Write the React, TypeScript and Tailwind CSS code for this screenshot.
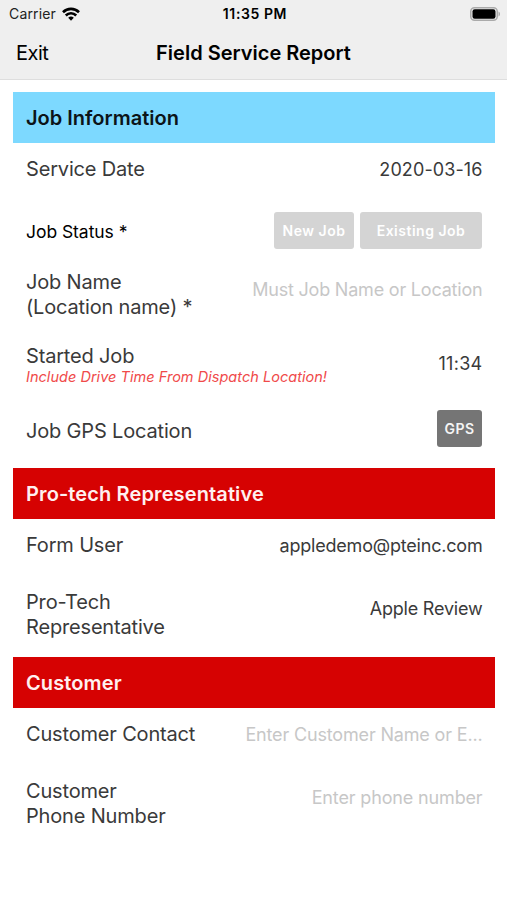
import type { ReactNode } from "react";

const SectionHeader = ({ title, className }: { title: string; className: string }) => (
  <div className={`flex h-[51px] items-center px-[13px] text-[20px] leading-6 font-semibold ${className}`}>
    <h2>{title}</h2>
  </div>
);

const Row = ({ label, className, children }: { label: ReactNode; className: string; children: ReactNode }) => (
  <div className={`flex items-center justify-between pr-[12.5px] pl-[13px] ${className}`}>
    <div className="text-[20px] leading-[25px] tracking-[-0.17px] whitespace-nowrap">{label}</div>
    {children}
  </div>
);

const App = () => {
  return (
    <div className="h-[900px] w-[507px] overflow-hidden bg-white font-['Inter',sans-serif] text-[#3a3a3a]">
      {/* Status bar and title */}
      <header className="h-20 border-b border-[#dedede] bg-[#efefef] text-black">
        <div className="grid h-[27px] grid-cols-3 items-center pr-[6px] pl-[9px] text-[14px]">
          <div className="flex items-center gap-1.5 tracking-[0.15px] text-[#222]">
            <span>Carrier</span>
            <svg width="18" height="14" viewBox="0 0 18 14" fill="none" stroke="#000" strokeWidth="2.6">
              <path d="M1 5.2a11.4 11.4 0 0 1 16 0M3.8 8.5a7.3 7.3 0 0 1 10.4 0" />
              <path d="M6.2 10.8a4 4 0 0 1 5.6 0L9 13.7z" fill="#000" stroke="none" />
            </svg>
          </div>
          <span className="text-center font-semibold tracking-[0.6px] whitespace-nowrap">11:35 PM</span>
          <svg className="justify-self-end" width="31" height="14" viewBox="0 0 31 14">
            <rect x=".75" y=".75" width="26.5" height="12.5" rx="3.8" fill="none" stroke="#aaa" strokeWidth="1.5" />
            <rect x="2.5" y="2.3" width="23" height="9.4" rx="2.2" />
            <path d="M28.5 4.5c2 .7 2 4.3 0 5z" fill="#aaa" />
          </svg>
        </div>
        <div className="grid h-[52px] grid-cols-[90px_1fr_90px] items-center px-4 text-[20px]">
          <span className="tracking-[-0.5px]">Exit</span>
          <h1 className="text-center font-semibold whitespace-nowrap">Field Service Report</h1>
        </div>
      </header>

      <main className="pt-3 pr-3 pl-[13px]">
        <SectionHeader title="Job Information" className="bg-[#7dd9ff] text-[#0c1418]" />
        <Row label="Service Date" className="h-[53px]">
          <span className="text-[18px] tracking-[0.1px]">2020-03-16</span>
        </Row>
        <Row
          label={<span className="text-[17.5px] tracking-[-0.05px] text-black">Job Status *</span>}
          className="h-[71px]"
        >
          <div className="mr-[0.5px] mb-[2px] flex gap-1.5 text-[14px] font-semibold tracking-[0.5px] text-white">
            <button className="h-[37px] w-[80px] rounded-[3px] bg-[#d4d4d4]">New Job</button>
            <button className="h-[37px] w-[122px] rounded-[3px] bg-[#d4d4d4]">Existing Job</button>
          </div>
        </Row>
        <Row label={<>Job Name<br />(Location name) *</>} className="h-[56px]">
          <span className="mb-3 text-[18px] tracking-[-0.2px] text-[#c7c7c7]">Must Job Name or Location</span>
        </Row>
        <Row
          label={
            <div className="pt-1">
              <div className="h-[23px]">Started Job</div>
              <div className="text-[14.5px] leading-[20px] tracking-[0.03px] text-[#f04a4a] italic">
                Include Drive Time From Dispatch Location!
              </div>
            </div>
          }
          className="h-[80px]"
        >
          <span className="text-[18px] tracking-[0.3px]">11:34</span>
        </Row>
        <Row label="Job GPS Location" className="h-[65px] pb-[9px]">
          <button className="mr-[0.5px] mb-[5px] h-[37px] w-[45px] rounded-[3px] bg-[#757575] text-[14px] font-semibold tracking-[0.5px] text-[#f4f4f4]">
            GPS
          </button>
        </Row>
        <SectionHeader title="Pro-tech Representative" className="bg-[#d60202] tracking-[0.12px] text-[#fff0f0]" />
        <Row label="Form User" className="h-[53px]">
          <span className="text-[18px] tracking-[-0.2px]">appledemo@pteinc.com</span>
        </Row>
        <Row label={<>Pro-Tech<br />Representative</>} className="h-[85px]">
          <span className="mb-3 text-[18px] tracking-[-0.2px]">Apple Review</span>
        </Row>
        <SectionHeader title="Customer" className="bg-[#d60202] tracking-[0.12px] text-[#fff0f0]" />
        <Row label="Customer Contact" className="h-[53px]">
          <span className="text-[18px] tracking-[-0.16px] text-[#c7c7c7]">Enter Customer Name or E...</span>
        </Row>
        <Row label={<>Customer<br />Phone Number</>} className="h-[85px]">
          <span className="mb-3 text-[18px] tracking-[-0.15px] text-[#c7c7c7]">Enter phone number</span>
        </Row>
      </main>
    </div>
  );
};

export default App;
